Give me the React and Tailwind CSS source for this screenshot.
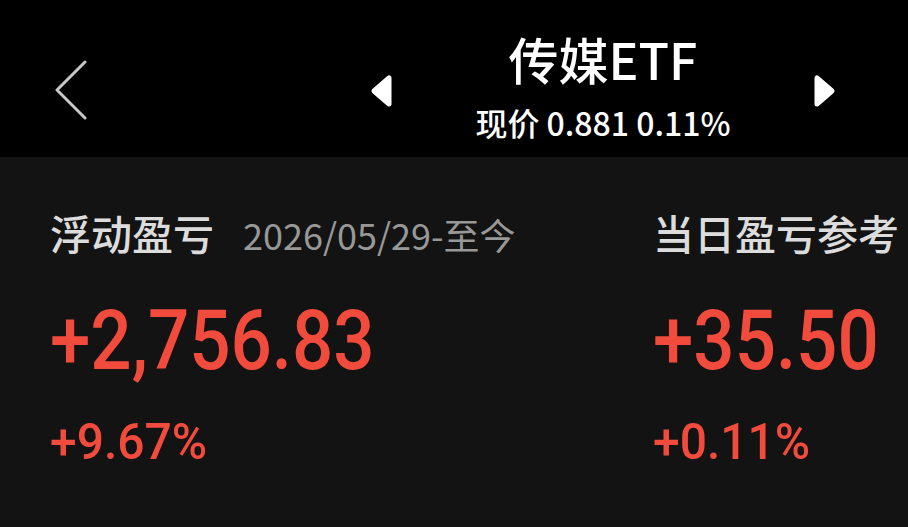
const cjk = '"Noto Sans CJK SC", "Noto Sans", sans-serif';
const num = 'Roboto, "Noto Sans", sans-serif';

function BackChevron() {
  return (
    <svg width="36" height="60" viewBox="0 0 36 60" className="block">
      <polyline
        points="32,2 4,30 32,58"
        fill="none"
        stroke="#c8c8c8"
        strokeWidth="3"
        strokeLinecap="round"
        strokeLinejoin="round"
      />
    </svg>
  );
}

function Arrow({ dir }) {
  const points = dir === 'left' ? '19,4 19,30 4,17' : '4,4 4,30 19,17';
  return (
    <svg width="23" height="34" viewBox="0 0 23 34" className="block">
      <polygon points={points} fill="#fff" stroke="#fff" strokeWidth="5" strokeLinejoin="round" />
    </svg>
  );
}

function PnlColumn({ label, date, amount, percent, width }) {
  return (
    <div className={`flex flex-col shrink-0 whitespace-nowrap ${width}`}>
      <div className="flex items-baseline leading-none" style={{ fontFamily: cjk }}>
        <span className="text-[41px] font-medium leading-none text-[#dcdcdc]">{label}</span>
        {date && <span className="ml-[29px] text-[36px] leading-none text-[#989898]">{date}</span>}
      </div>
      <div className="mt-[42px] leading-[1.1]">
        <span
          className="inline-block origin-left scale-x-[0.865] text-[84px] font-medium leading-[1.1] text-[#f04b3c]"
          style={{ fontFamily: num }}
        >
          {amount}
        </span>
      </div>
      <div className="mt-[25px] leading-[1.2]">
        <span
          className="inline-block origin-left scale-x-[0.96] text-[50px] font-medium leading-[1.2] text-[#f04b3c]"
          style={{ fontFamily: num }}
        >
          {percent}
        </span>
      </div>
    </div>
  );
}

export default function App() {
  return (
    <div className="w-[908px] h-[527px] overflow-hidden bg-[#131313] flex flex-col">
      <header className="h-[157px] shrink-0 bg-black flex items-start">
        <div className="ml-[53px] mt-[60px]">
          <BackChevron />
        </div>
        <div className="ml-[281px] w-[466px] flex items-start justify-between">
          <div className="mt-[74px]">
            <Arrow dir="left" />
          </div>
          <div className="mt-[33px] flex flex-col items-center text-white" style={{ fontFamily: cjk }}>
            <span className="text-[50px] font-medium leading-none">传媒ETF</span>
            <span className="mt-[23px] text-[32px] font-medium leading-none whitespace-nowrap">现价 0.881 0.11%</span>
          </div>
          <div className="mt-[74px]">
            <Arrow dir="right" />
          </div>
        </div>
      </header>

      <main className="flex pt-[55px] pl-[50px]">
        <PnlColumn
          label="浮动盈亏"
          date="2026/05/29-至今"
          amount="+2,756.83"
          percent="+9.67%"
          width="w-[603px]"
        />
        <PnlColumn label="当日盈亏参考" amount="+35.50" percent="+0.11%" width="w-[255px]" />
      </main>
    </div>
  );
}
